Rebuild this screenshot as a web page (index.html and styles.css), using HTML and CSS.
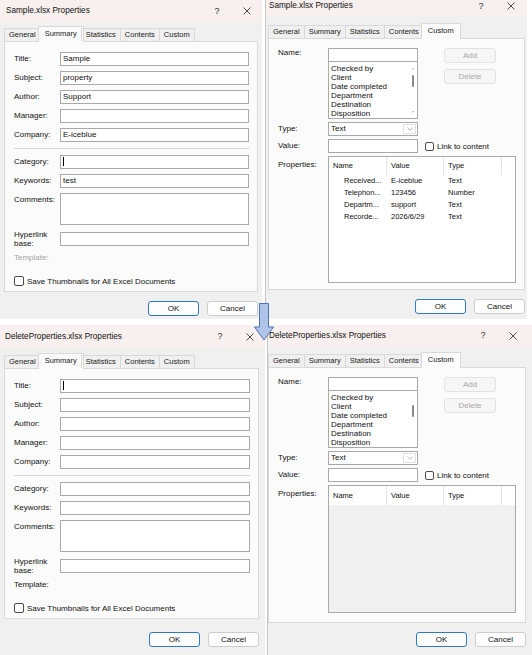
FILE: index.html
```html
<!DOCTYPE html>
<html lang="en">
<head>
<meta charset="utf-8">
<title>Document Properties</title>
<link rel="stylesheet" href="styles.css">
</head>
<body>

<div class="sheet">

  <!-- Sample.xlsx, Summary tab -->
  <div class="dialog dlg-tl">
    <div class="bar">
      <span class="caption">Sample.xlsx Properties</span>
      <span class="help">?</span>
      <span class="close"><svg width="8" height="8" viewBox="0 0 8 8"><path d="M0.5 0.5L7.5 7.5M7.5 0.5L0.5 7.5" stroke="#3a3a3a" stroke-width="0.9"/></svg></span>
    </div>
    <div class="tabs">
      <span class="tab">General</span>
      <span class="tab active">Summary</span>
      <span class="tab">Statistics</span>
      <span class="tab">Contents</span>
      <span class="tab">Custom</span>
    </div>
    <div class="panel summary">
      <span class="lbl">Title:</span><div class="field">Sample</div>
      <span class="lbl">Subject:</span><div class="field">property</div>
      <span class="lbl">Author:</span><div class="field">Support</div>
      <span class="lbl">Manager:</span><div class="field"></div>
      <span class="lbl">Company:</span><div class="field">E-iceblue</div>
      <div class="sep"></div>
      <span class="lbl">Category:</span><div class="field"><i class="caret"></i></div>
      <span class="lbl">Keywords:</span><div class="field">test</div>
      <span class="lbl top">Comments:</span><div class="field tall"></div>
      <span class="lbl two">Hyperlink<br>base:</span><div class="field"></div>
      <span class="lbl tpl muted">Template:</span>
      <div class="check-row"><span class="box"></span><span>Save Thumbnails for All Excel Documents</span></div>
    </div>
    <div class="buttons">
      <span class="btn default">OK</span>
      <span class="btn">Cancel</span>
    </div>
  </div>

  <!-- Sample.xlsx, Custom tab -->
  <div class="dialog dlg-tr">
    <div class="bar">
      <span class="caption">Sample.xlsx Properties</span>
      <span class="help">?</span>
      <span class="close"><svg width="8" height="8" viewBox="0 0 8 8"><path d="M0.5 0.5L7.5 7.5M7.5 0.5L0.5 7.5" stroke="#3a3a3a" stroke-width="0.9"/></svg></span>
    </div>
    <div class="tabs">
      <span class="tab">General</span>
      <span class="tab">Summary</span>
      <span class="tab">Statistics</span>
      <span class="tab">Contents</span>
      <span class="tab active">Custom</span>
    </div>
    <div class="panel custom">
      <span class="lbl name-lbl">Name:</span>
      <div class="namebox">
        <div class="field"></div>
        <div class="list">
          <ul>
            <li>Checked by</li>
            <li>Client</li>
            <li>Date completed</li>
            <li>Department</li>
            <li>Destination</li>
            <li>Disposition</li>
          </ul>
          <svg class="scroll" width="8" height="56" viewBox="0 0 8 56"><path d="M2.5 7.5L4 5.5L5.5 7.5Z" fill="#c9c9c9"/><rect x="3" y="13" width="2" height="12" rx="1" fill="#8b8b8b"/><path d="M2.5 49L4 51L5.5 49Z" fill="#c9c9c9"/></svg>
        </div>
      </div>
      <div class="side">
        <span class="btn off">Add</span>
        <span class="btn off">Delete</span>
      </div>

      <span class="lbl">Type:</span>
      <div class="select"><span>Text</span><span class="drop"><svg width="6" height="4" viewBox="0 0 6 4"><path d="M0.5 0.8L3 3.2L5.5 0.8" fill="none" stroke="#9a9a9a" stroke-width="0.8"/></svg></span></div>

      <span class="lbl">Value:</span>
      <div class="field"></div>
      <div class="link"><span class="box small"></span><span>Link to content</span></div>

      <span class="lbl top-props">Properties:</span>
      <div class="props">
        <div class="prow head"><span>Name</span><span>Value</span><span>Type</span><span></span></div>
        <div class="prow"><span>Received...</span><span>E-iceblue</span><span>Text</span></div>
        <div class="prow"><span>Telephon...</span><span>123456</span><span>Number</span></div>
        <div class="prow"><span>Departm...</span><span>support</span><span>Text</span></div>
        <div class="prow"><span>Recorde...</span><span>2026/6/29</span><span>Text</span></div>
      </div>
    </div>
    <div class="buttons">
      <span class="btn default">OK</span>
      <span class="btn">Cancel</span>
    </div>
  </div>

  <!-- DeleteProperties.xlsx, Summary tab -->
  <div class="dialog dlg-bl">
    <div class="bar">
      <span class="caption">DeleteProperties.xlsx Properties</span>
      <span class="help">?</span>
      <span class="close"><svg width="8" height="8" viewBox="0 0 8 8"><path d="M0.5 0.5L7.5 7.5M7.5 0.5L0.5 7.5" stroke="#3a3a3a" stroke-width="0.9"/></svg></span>
    </div>
    <div class="tabs">
      <span class="tab">General</span>
      <span class="tab active">Summary</span>
      <span class="tab">Statistics</span>
      <span class="tab">Contents</span>
      <span class="tab">Custom</span>
    </div>
    <div class="panel summary">
      <span class="lbl">Title:</span><div class="field"><i class="caret"></i></div>
      <span class="lbl">Subject:</span><div class="field"></div>
      <span class="lbl">Author:</span><div class="field"></div>
      <span class="lbl">Manager:</span><div class="field"></div>
      <span class="lbl">Company:</span><div class="field"></div>
      <div class="sep"></div>
      <span class="lbl">Category:</span><div class="field"></div>
      <span class="lbl">Keywords:</span><div class="field"></div>
      <span class="lbl top">Comments:</span><div class="field tall"></div>
      <span class="lbl two">Hyperlink<br>base:</span><div class="field"></div>
      <span class="lbl tpl">Template:</span>
      <div class="check-row"><span class="box"></span><span>Save Thumbnails for All Excel Documents</span></div>
    </div>
    <div class="buttons">
      <span class="btn default">OK</span>
      <span class="btn">Cancel</span>
    </div>
  </div>

  <!-- DeleteProperties.xlsx, Custom tab -->
  <div class="dialog dlg-br">
    <div class="bar">
      <span class="caption">DeleteProperties.xlsx Properties</span>
      <span class="help">?</span>
      <span class="close"><svg width="8" height="8" viewBox="0 0 8 8"><path d="M0.5 0.5L7.5 7.5M7.5 0.5L0.5 7.5" stroke="#3a3a3a" stroke-width="0.9"/></svg></span>
    </div>
    <div class="tabs">
      <span class="tab">General</span>
      <span class="tab">Summary</span>
      <span class="tab">Statistics</span>
      <span class="tab">Contents</span>
      <span class="tab active">Custom</span>
    </div>
    <div class="panel custom">
      <span class="lbl name-lbl">Name:</span>
      <div class="namebox">
        <div class="field"></div>
        <div class="list">
          <ul>
            <li>Checked by</li>
            <li>Client</li>
            <li>Date completed</li>
            <li>Department</li>
            <li>Destination</li>
            <li>Disposition</li>
          </ul>
          <svg class="scroll" width="8" height="56" viewBox="0 0 8 56"><rect x="3" y="14" width="2" height="12" rx="1" fill="#8b8b8b"/></svg>
        </div>
      </div>
      <div class="side">
        <span class="btn off">Add</span>
        <span class="btn off">Delete</span>
      </div>

      <span class="lbl">Type:</span>
      <div class="select"><span>Text</span><span class="drop"><svg width="6" height="4" viewBox="0 0 6 4"><path d="M0.5 0.8L3 3.2L5.5 0.8" fill="none" stroke="#9a9a9a" stroke-width="0.8"/></svg></span></div>

      <span class="lbl">Value:</span>
      <div class="field"></div>
      <div class="link"><span class="box small"></span><span>Link to content</span></div>

      <span class="lbl top-props">Properties:</span>
      <div class="props empty">
        <div class="prow head"><span>Name</span><span>Value</span><span>Type</span><span></span></div>
      </div>
    </div>
    <div class="buttons">
      <span class="btn default">OK</span>
      <span class="btn">Cancel</span>
    </div>
  </div>

  <!-- arrow from the first pair down to the second -->
  <svg class="arrow" width="22" height="38" viewBox="0 0 22 38">
    <path d="M6.5 0.5H15.5V24H20.5L11 37L1.5 24H6.5Z" fill="#afc4e9" stroke="#4d73b8" stroke-width="1"/>
  </svg>

</div>

</body>
</html>
```

FILE: styles.css
```css
* {
  box-sizing: border-box;
}

body {
  margin: 0;
  background: #fff;
  font-family: "Liberation Sans", Arial, sans-serif;
  font-size: 8px;
  color: #111;
}

/* four windows on one sheet */
.sheet {
  position: relative;
  width: 532px;
  height: 655px;
  display: grid;
  grid-template-columns: 265px 267px;
  grid-template-rows: 319px 330px;
  row-gap: 6px;
  overflow: hidden;
}

.dialog {
  display: flex;
  flex-direction: column;
  background: #f0f0f0;
  overflow: hidden;
}

.dlg-tl {
  width: 262px;
  --bar-h: 22px; --bar-lh: 22px; --bar-pr: 0px; --cap-pl: 6px;
  --tabs-h: 19px; --panel-h: 251px; --foot: 9px;
  --in-l: 4px; --in-r: 4px;
}

.dlg-tr {
  width: 262px;
  border-left: 1px solid #c6c6c6;
  --bar-h: 16px; --bar-lh: 12px; --bar-pr: 1px; --cap-pl: 3px;
  --tabs-h: 22px; --panel-h: 252px; --foot: 9px;
  --in-l: 2px; --in-r: 2px;
}

.dlg-bl {
  width: 265px;
  --bar-h: 23px; --bar-lh: 23px; --bar-pr: 0px; --cap-pl: 5px;
  --tabs-h: 20px; --panel-h: 251px; --foot: 13px;
  --in-l: 4px; --in-r: 6px;
}

.dlg-br {
  width: 265px;
  margin-left: 2px;
  border-left: 1px solid #c6c6c6;
  --bar-h: 21px; --bar-lh: 21px; --bar-pr: 4px; --cap-pl: 1px;
  --tabs-h: 21px; --panel-h: 256px; --foot: 9px;
  --in-l: 0px; --in-r: 6px;
}

/* title bar */
.bar {
  display: flex;
  flex-shrink: 0;
  height: var(--bar-h);
  line-height: var(--bar-lh);
  padding-left: var(--cap-pl);
  padding-right: var(--bar-pr);
  background: #f7f0ee;
}

.caption {
  flex: 1;
  font-size: 8.2px;
  color: #111;
  white-space: nowrap;
}

.help {
  width: 30px;
  text-align: center;
  font-size: 9px;
  color: #333;
}

.close {
  width: 30px;
  height: var(--bar-lh);
  display: flex;
  align-items: center;
  justify-content: center;
}

/* tab strip */
.tabs {
  position: relative;
  z-index: 1;
  display: flex;
  align-items: flex-end;
  flex-shrink: 0;
  height: var(--tabs-h);
  padding-left: var(--in-l);
}

.tab {
  height: 13px;
  line-height: 12px;
  padding: 0 4px;
  margin-left: -1px;
  border: 1px solid #d9d9d9;
  border-bottom: 0;
  font-size: 7.5px;
  color: #1a1a1a;
  white-space: nowrap;
}

.tab:first-child {
  margin-left: 0;
}

.tab.active {
  height: 16px;
  line-height: 14px;
  margin: 0 -2px -1px -3px;
  padding: 0 6px;
  background: #fbfbfb;
}

.panel {
  flex-shrink: 0;
  height: var(--panel-h);
  margin: 0 var(--in-r) 0 var(--in-l);
  background: #fbfbfb;
  border: 1px solid #d9d9d9;
}

/* OK / Cancel */
.buttons {
  display: flex;
  justify-content: flex-end;
  gap: 8px;
  margin-top: var(--foot);
  padding-right: var(--in-r);
}

.btn {
  width: 51px;
  height: 15px;
  line-height: 13px;
  text-align: center;
  border: 1px solid #cdcdcd;
  border-radius: 3px;
  background: #fdfdfd;
  font-size: 8px;
  color: #111;
}

.btn.default {
  border-color: #2f78c4;
}

.btn.off {
  width: 52px;
  color: #a8a8a8;
  border-color: #e2e2e2;
  background: #f6f6f6;
}

/* text boxes */
.lbl {
  line-height: 10px;
  white-space: nowrap;
}

.muted {
  color: #a3a3a3;
}

.field {
  height: 14px;
  padding: 0 2px;
  line-height: 12px;
  border: 1px solid #a9a9a9;
  background: #fff;
  white-space: nowrap;
}

.field.tall {
  height: 32px;
}

.caret {
  display: inline-block;
  width: 1px;
  height: 9px;
  background: #000;
  vertical-align: middle;
}

.box {
  width: 10px;
  height: 10px;
  border: 1px solid #4d4d4d;
  border-radius: 2px;
  background: #fff;
}

.box.small {
  width: 9px;
  height: 9px;
}

/* Summary tab */
.summary {
  display: grid;
  grid-template-columns: 46px 1fr;
  row-gap: 5px;
  align-items: center;
  align-content: start;
  padding: 10px 8px 0 9px;
}

.summary .top {
  align-self: start;
  padding-top: 2px;
}

.summary .two {
  line-height: 9px;
}

.sep {
  grid-column: 1 / -1;
  height: 1px;
  margin: 1px 0;
  background: #d5d5d5;
}

.tpl {
  grid-column: 1 / -1;
}

.check-row {
  grid-column: 1 / -1;
  margin-top: 8px;
  display: flex;
  align-items: center;
  gap: 3px;
}

/* Custom tab */
.custom {
  display: grid;
  grid-template-columns: 50px 90px 1fr;
  row-gap: 3px;
  align-items: center;
  align-content: start;
  padding: 9px 0 0 9px;
}

.custom .lbl {
  grid-column: 1;
}

.custom .name-lbl {
  align-self: start;
}

.custom .top-props {
  align-self: start;
  padding-top: 4px;
}

.namebox {
  align-self: start;
  display: flex;
  flex-direction: column;
}

.list {
  display: flex;
  height: 58px;
  margin-top: -1px;
  border: 1px solid #a9a9a9;
  background: #fff;
}

.list ul {
  flex: 1;
  margin: 0;
  padding: 2px 0 0 2px;
  list-style: none;
  line-height: 9px;
  white-space: nowrap;
}

.scroll {
  flex-shrink: 0;
}

.side {
  align-self: start;
  display: flex;
  flex-direction: column;
  gap: 6px;
  margin-left: 26px;
}

.select {
  display: flex;
  height: 14px;
  border: 1px solid #a9a9a9;
  background: #fff;
}

.select > span:first-child {
  flex: 1;
  padding-left: 2px;
  line-height: 12px;
}

.drop {
  width: 13px;
  height: 10px;
  margin: 1px 1px 0 0;
  border: 1px solid #e2e2e2;
  display: flex;
  align-items: center;
  justify-content: center;
}

.link {
  display: flex;
  align-items: center;
  gap: 3px;
  margin-left: 7px;
}

/* properties list view */
.props {
  grid-column: 2 / span 2;
  width: 188px;
  height: 127px;
  border: 1px solid #a9a9a9;
  background: #fff;
  font-size: 7.5px;
}

.props.empty {
  height: 128px;
  background: #f0f0f0;
}

.prow {
  display: grid;
  grid-template-columns: 58px 57px 58px 1fr;
  height: 12px;
  line-height: 12px;
}

.prow span {
  padding-left: 4px;
  white-space: nowrap;
  overflow: hidden;
}

.prow span:first-child {
  padding-left: 15px;
}

.prow.head {
  height: 18px;
  line-height: 18px;
  background: #fff;
}

.empty .prow.head {
  height: 19px;
  line-height: 19px;
}

.prow.head span {
  padding-left: 4px;
  border-right: 1px solid #e4e4e4;
}

.prow.head span:last-child {
  border-right: 0;
}

.arrow {
  position: absolute;
  left: 253px;
  top: 303px;
  z-index: 5;
}
```
